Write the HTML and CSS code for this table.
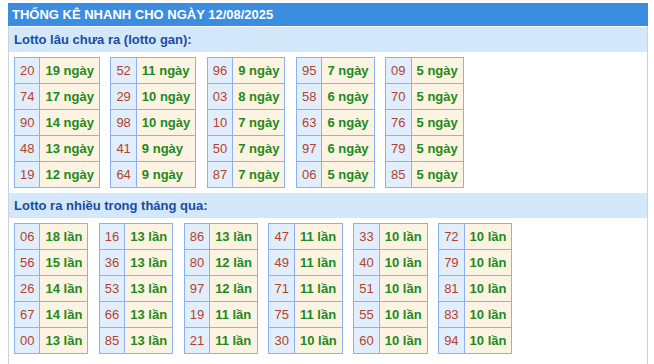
FILE: index.html
```html
<!DOCTYPE html>
<html lang="vi">
<head>
<meta charset="utf-8">
<title>Thống kê nhanh</title>
<link rel="stylesheet" href="styles.css">
</head>
<body>
<div class="box">
  <div class="head">THỐNG KÊ NHANH CHO NGÀY 12/08/2025</div>
  <div class="body">
    <div class="band">Lotto lâu chưa ra (lotto gan):</div>
    <div class="tables">
      <table><tr><td class="n">20</td><td class="v">19 ngày</td></tr><tr><td class="n">74</td><td class="v">17 ngày</td></tr><tr><td class="n">90</td><td class="v">14 ngày</td></tr><tr><td class="n">48</td><td class="v">13 ngày</td></tr><tr><td class="n">19</td><td class="v">12 ngày</td></tr></table>
      <table><tr><td class="n">52</td><td class="v">11 ngày</td></tr><tr><td class="n">29</td><td class="v">10 ngày</td></tr><tr><td class="n">98</td><td class="v">10 ngày</td></tr><tr><td class="n">41</td><td class="v">9 ngày</td></tr><tr><td class="n">64</td><td class="v">9 ngày</td></tr></table>
      <table><tr><td class="n">96</td><td class="v">9 ngày</td></tr><tr><td class="n">03</td><td class="v">8 ngày</td></tr><tr><td class="n">10</td><td class="v">7 ngày</td></tr><tr><td class="n">50</td><td class="v">7 ngày</td></tr><tr><td class="n">87</td><td class="v">7 ngày</td></tr></table>
      <table><tr><td class="n">95</td><td class="v">7 ngày</td></tr><tr><td class="n">58</td><td class="v">6 ngày</td></tr><tr><td class="n">63</td><td class="v">6 ngày</td></tr><tr><td class="n">97</td><td class="v">6 ngày</td></tr><tr><td class="n">06</td><td class="v">5 ngày</td></tr></table>
      <table><tr><td class="n">09</td><td class="v">5 ngày</td></tr><tr><td class="n">70</td><td class="v">5 ngày</td></tr><tr><td class="n">76</td><td class="v">5 ngày</td></tr><tr><td class="n">79</td><td class="v">5 ngày</td></tr><tr><td class="n">85</td><td class="v">5 ngày</td></tr></table>
    </div>
    <div class="band">Lotto ra nhiều trong tháng qua:</div>
    <div class="tables">
      <table><tr><td class="n">06</td><td class="v">18 lần</td></tr><tr><td class="n">56</td><td class="v">15 lần</td></tr><tr><td class="n">26</td><td class="v">14 lần</td></tr><tr><td class="n">67</td><td class="v">14 lần</td></tr><tr><td class="n">00</td><td class="v">13 lần</td></tr></table>
      <table><tr><td class="n">16</td><td class="v">13 lần</td></tr><tr><td class="n">36</td><td class="v">13 lần</td></tr><tr><td class="n">53</td><td class="v">13 lần</td></tr><tr><td class="n">66</td><td class="v">13 lần</td></tr><tr><td class="n">85</td><td class="v">13 lần</td></tr></table>
      <table><tr><td class="n">86</td><td class="v">13 lần</td></tr><tr><td class="n">80</td><td class="v">12 lần</td></tr><tr><td class="n">97</td><td class="v">12 lần</td></tr><tr><td class="n">19</td><td class="v">11 lần</td></tr><tr><td class="n">21</td><td class="v">11 lần</td></tr></table>
      <table><tr><td class="n">47</td><td class="v">11 lần</td></tr><tr><td class="n">49</td><td class="v">11 lần</td></tr><tr><td class="n">71</td><td class="v">11 lần</td></tr><tr><td class="n">75</td><td class="v">11 lần</td></tr><tr><td class="n">30</td><td class="v">10 lần</td></tr></table>
      <table><tr><td class="n">33</td><td class="v">10 lần</td></tr><tr><td class="n">40</td><td class="v">10 lần</td></tr><tr><td class="n">51</td><td class="v">10 lần</td></tr><tr><td class="n">55</td><td class="v">10 lần</td></tr><tr><td class="n">60</td><td class="v">10 lần</td></tr></table>
      <table><tr><td class="n">72</td><td class="v">10 lần</td></tr><tr><td class="n">79</td><td class="v">10 lần</td></tr><tr><td class="n">81</td><td class="v">10 lần</td></tr><tr><td class="n">83</td><td class="v">10 lần</td></tr><tr><td class="n">94</td><td class="v">10 lần</td></tr></table>
    </div>
  </div>
</div>
</body>
</html>
```
FILE: styles.css
```css
html, body {
  margin: 0;
  padding: 0;
  background: #ffffff;
}
body {
  padding: 3px 6px 0 8px;
  font-family: "Liberation Sans", Arial, sans-serif;
  font-size: 13px;
}
.box {
  width: 640px;
}
.head {
  height: 23px;
  line-height: 23px;
  background: #3a8de0;
  color: #ffffff;
  font-weight: bold;
  font-size: 13px;
  padding-left: 4px;
}
.body {
  border-left: 1px solid #c9d3df;
  border-right: 1px solid #c9d3df;
  padding-top: 1px;
  min-height: 340px;
}
.band {
  height: 25px;
  line-height: 25px;
  background: #d4e8fb;
  color: #1b4ba3;
  font-weight: bold;
  padding-left: 5px;
}
.tables {
  display: flex;
  gap: 10.5px;
  align-items: flex-start;
  padding: 5px 0 5px 5px;
}
table {
  border-collapse: collapse;
}
td {
  border: 1px solid #8cb0f2;
  padding: 5px;
  line-height: 15px;
  white-space: nowrap;
}
td.n {
  background: #e1eefd;
  color: #b4432a;
  text-align: center;
}
td.v {
  background: #fdf3e2;
  color: #1d8a1d;
  font-weight: bold;
}
```
